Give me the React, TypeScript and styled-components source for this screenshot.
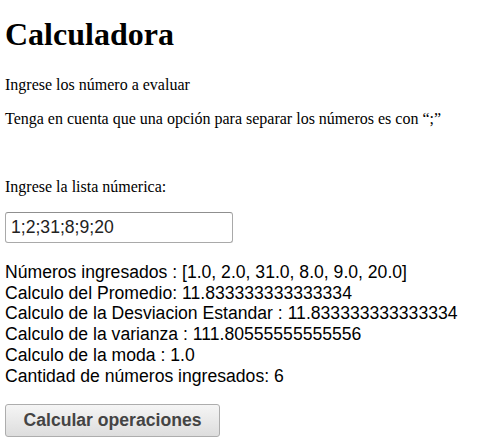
import styled, { createGlobalStyle } from 'styled-components';

const GlobalStyle = createGlobalStyle`
  html, body {
    margin: 0;
    padding: 0;
    background: #ffffff;
  }
  body {
    font-family: "Liberation Serif", "Times New Roman", serif;
    color: #000000;
  }
`;

const Page = styled.div`
  padding: 0 5px;
`;

const Title = styled.h1`
  font-family: "Liberation Serif", "Times New Roman", serif;
  font-size: 32px;
  font-weight: bold;
  margin: 16px 0 23px;
`;

const Note = styled.p`
  font-size: 16px;
  margin: 16px 0;
  min-height: 18px;
`;

const Label = styled.p`
  font-size: 16px;
  margin: 16px 0 16px;
`;

const NumbersInput = styled.input`
  box-sizing: border-box;
  width: 228px;
  height: 31px;
  padding: 2px 5px;
  font-family: "Liberation Sans", Arial, sans-serif;
  font-size: 17.6px;
  color: #222222;
  border: 1px solid #a9a9a9;
  border-top-color: #8f8f8f;
  border-radius: 3px;
  outline: none;
`;

const Results = styled.div`
  margin-top: 19px;
  font-family: "Liberation Sans", Arial, sans-serif;
  font-size: 17.6px;
  line-height: 20.7px;
  color: #000000;
`;

const ResultLine = styled.div``;

const CalcButton = styled.button`
  display: block;
  margin-top: 18px;
  width: 215px;
  height: 33px;
  font-family: "Liberation Sans", Arial, sans-serif;
  font-size: 17.6px;
  font-weight: bold;
  color: #444444;
  background: linear-gradient(#f5f5f5, #dddddd);
  border: 1px solid #adadad;
  border-radius: 3px;
  cursor: pointer;
`;

const results = [
  'Números ingresados : [1.0, 2.0, 31.0, 8.0, 9.0, 20.0]',
  'Calculo del Promedio: 11.833333333333334',
  'Calculo de la Desviacion Estandar : 11.833333333333334',
  'Calculo de la varianza : 111.80555555555556',
  'Calculo de la moda : 1.0',
  'Cantidad de números ingresados: 6',
];

const App = () => {
  return (
    <Page>
      <GlobalStyle />
      <Title>Calculadora</Title>
      <Note>Ingrese los número a evaluar</Note>
      <Note>Tenga en cuenta que una opción para separar los números es con “;”</Note>
      <Note>&nbsp;</Note>
      <Label>Ingrese la lista númerica:</Label>
      <NumbersInput defaultValue="1;2;31;8;9;20" />
      <Results>
        {results.map((line) => (
          <ResultLine key={line}>{line}</ResultLine>
        ))}
      </Results>
      <CalcButton>Calcular operaciones</CalcButton>
    </Page>
  );
};

export default App;
